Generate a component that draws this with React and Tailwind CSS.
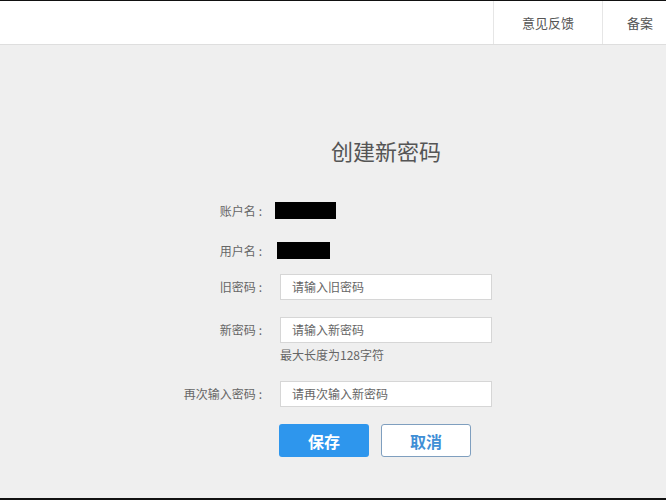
function Label({ children }) {
  return (
    <div className="w-[269px] text-right text-[12px] text-[#666] pr-[7px] whitespace-nowrap">
      {children}
      <span className="ml-[3px]">:</span>
    </div>
  );
}

export default function App() {
  const font = { fontFamily: '"Noto Sans CJK SC", "Microsoft YaHei", sans-serif' };
  return (
    <div className="w-[666px] h-[500px] overflow-hidden flex flex-col bg-[#efefef]" style={font}>
      <div className="h-[1px] bg-[#111] shrink-0" />
      <div className="h-[44px] shrink-0 bg-white border-b border-[#dedede] flex">
        <div className="flex-1" />
        <div className="w-[109px] shrink-0 border-l border-[#e6e6e6] flex items-center justify-center text-[13px] text-[#555]">
          意见反馈
        </div>
        <div className="w-[64px] shrink-0 border-l border-[#e6e6e6] flex items-center pl-[24px] text-[13px] text-[#555] whitespace-nowrap">
          备案
        </div>
      </div>
      <div className="flex-1 pt-[90px]">
        <div className="ml-[280px] w-[212px] h-[30px] flex items-center justify-center text-[22px] text-[#555] leading-[30px]">
          创建新密码
        </div>
        <div className="flex flex-col">
          <div className="flex items-center h-[17px] mt-[37px]">
            <Label>账户名</Label>
            <div className="ml-[6px] w-[61px] h-[17px] bg-black" />
          </div>
          <div className="flex items-center h-[17px] mt-[23px]">
            <Label>用户名</Label>
            <div className="ml-[8px] w-[53px] h-[17px] bg-black" />
          </div>
          <div className="flex items-center h-[26px] mt-[15px]">
            <Label>旧密码</Label>
            <div className="ml-[11px] w-[212px] h-[26px] bg-white border border-[#d6d6d6] flex items-center pl-[11px] text-[12px] text-[#666]">
              请输入旧密码
            </div>
          </div>
          <div className="flex items-center h-[26px] mt-[17px]">
            <Label>新密码</Label>
            <div className="ml-[11px] w-[212px] h-[26px] bg-white border border-[#d6d6d6] flex items-center pl-[11px] text-[12px] text-[#666]">
              请输入新密码
            </div>
          </div>
          <div className="ml-[280px] h-[16px] mt-[4px] flex items-center text-[12px] text-[#666] leading-[16px]">
            最大长度为128字符
          </div>
          <div className="flex items-center h-[26px] mt-[18px]">
            <Label>再次输入密码</Label>
            <div className="ml-[11px] w-[212px] h-[26px] bg-white border border-[#d6d6d6] flex items-center pl-[11px] text-[12px] text-[#666]">
              请再次输入新密码
            </div>
          </div>
          <div className="flex ml-[279px] mt-[17px] gap-[12px]">
            <div className="w-[90px] h-[33px] rounded-[3px] bg-[#2e96ed] flex items-center justify-center text-white text-[16px] font-bold">
              保存
            </div>
            <div className="w-[90px] h-[33px] rounded-[3px] bg-white border border-[#7f9fbf] flex items-center justify-center text-[#3f8fd6] text-[16px] font-bold">
              取消
            </div>
          </div>
        </div>
      </div>
      <div className="h-[2px] bg-[#111] shrink-0" />
    </div>
  );
}
